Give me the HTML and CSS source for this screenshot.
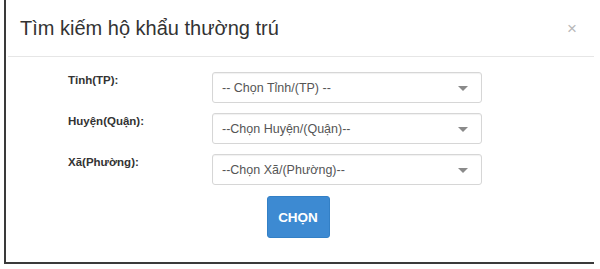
FILE: index.html
```html
<!DOCTYPE html>
<html lang="vi">
<head>
<meta charset="utf-8">
<title>Tìm kiếm hộ khẩu thường trú</title>
<link rel="stylesheet" href="styles.css">
</head>
<body>
<div class="frame">
  <div class="modal">
    <div class="modal-header">
      <h4 class="modal-title">Tìm kiếm hộ khẩu thường trú</h4>
      <span class="close">×</span>
    </div>
    <div class="modal-body">
      <div class="form-row">
        <label class="field-label">Tỉnh(TP):</label>
        <div class="select"><span class="select-text">-- Chọn Tỉnh/(TP) --</span><span class="caret"></span></div>
      </div>
      <div class="form-row">
        <label class="field-label">Huyện(Quận):</label>
        <div class="select"><span class="select-text">--Chọn Huyện/(Quận)--</span><span class="caret"></span></div>
      </div>
      <div class="form-row">
        <label class="field-label">Xã(Phường):</label>
        <div class="select"><span class="select-text">--Chọn Xã/(Phường)--</span><span class="caret"></span></div>
      </div>
      <div class="actions">
        <button class="btn-primary" type="button">CHỌN</button>
      </div>
    </div>
  </div>
</div>
</body>
</html>
```

FILE: styles.css
```css
html, body {
  margin: 0;
  padding: 0;
  background: #ffffff;
  font-family: "Liberation Sans", Arial, sans-serif;
}

.frame {
  margin-left: 4px;
  width: 588px;
  height: 262px;
  border-left: 2px solid #3a3a3a;
  border-bottom: 2px solid #3a3a3a;
  box-sizing: content-box;
}

.modal {
  padding-left: 2px;
}

.modal-header {
  height: 56px;
  border-bottom: 1px solid #e6e6e6;
  display: flex;
  align-items: center;
  justify-content: space-between;
  padding: 0 17px 0 12px;
}

.modal-title {
  margin: 0;
  font-size: 20px;
  font-weight: normal;
  color: #333333;
}

.close {
  font-size: 17px;
  color: #b8b8b8;
  line-height: 1;
}

.modal-body {
  padding-top: 15px;
  padding-left: 60px;
}

.form-row {
  display: flex;
  align-items: flex-start;
  margin-bottom: 10px;
}

.field-label {
  width: 144px;
  font-size: 11.5px;
  font-weight: bold;
  color: #333333;
  padding-top: 2px;
}

.select {
  width: 270px;
  height: 31px;
  box-sizing: border-box;
  border: 1px solid #d6d6d6;
  border-radius: 3px;
  box-shadow: inset 0 1px 1px rgba(0,0,0,0.06);
  display: flex;
  align-items: center;
  justify-content: space-between;
  padding: 0 13px 0 9px;
}

.select-text {
  font-size: 12.5px;
  color: #555555;
}

.caret {
  width: 0;
  height: 0;
  border-left: 5px solid transparent;
  border-right: 5px solid transparent;
  border-top: 5px solid #8a8a8a;
  margin-top: 2px;
}

.actions {
  margin-left: -64px;
  width: 588px;
  text-align: center;
  padding-top: 1px;
}

.btn-primary {
  width: 63px;
  height: 42px;
  background: #3d8ad2;
  border: 1px solid #3380c6;
  border-radius: 3px;
  color: #ffffff;
  font-family: "Liberation Sans", Arial, sans-serif;
  font-weight: bold;
  font-size: 13.5px;
  padding: 0;
}
```
